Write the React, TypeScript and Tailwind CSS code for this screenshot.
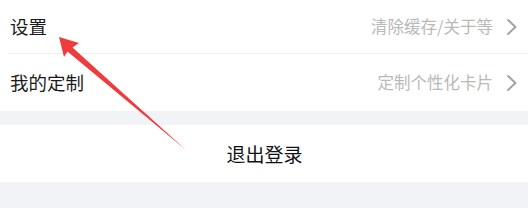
const font = "font-['Noto_Sans_CJK_SC','Noto_Sans',sans-serif]";

function Chevron() {
  return (
    <svg width="13" height="18" viewBox="0 0 13 18" className="ml-3 shrink-0">
      <path d="M2.5 1.5 L10.5 9 L2.5 16.5" fill="none" stroke="#a3a3a3" strokeWidth="2" />
    </svg>
  );
}

export default function App() {
  const rows = [
    { title: "设置", hint: "清除缓存/关于等", h: "h-[53px]" },
    { title: "我的定制", hint: "定制个性化卡片", h: "h-[57px]" },
  ];

  return (
    <div className={`relative w-[528px] h-[208px] bg-[#f2f3f7] overflow-hidden ${font}`}>
      <div className="bg-white">
        {rows.map((r, i) => (
          <div key={i} className={i > 0 ? "ml-2 border-t border-[#efefef]" : "ml-2"}>
            <div className={`flex items-center justify-between pl-[2px] pr-[10px] ${r.h}`}>
              <span className="text-[18.5px] text-[#1a1a1a] leading-none">{r.title}</span>
              <div className="flex items-center">
                <span className="text-[16.5px] text-[#b9b9b9] leading-none">{r.hint}</span>
                <Chevron />
              </div>
            </div>
          </div>
        ))}
      </div>
      <div className="mt-[14px] h-[57px] bg-white flex items-center justify-center">
        <span className="text-[19px] text-[#111] leading-none pl-[1px]">退出登录</span>
      </div>

      <svg className="absolute left-0 top-0" width="528" height="208" viewBox="0 0 528 208">
        <polygon
          points="59,37 79,43 72.5,47.5 186,150 67.5,51.5 64,57"
          fill="#ef3b3c"
        />
      </svg>
    </div>
  );
}
